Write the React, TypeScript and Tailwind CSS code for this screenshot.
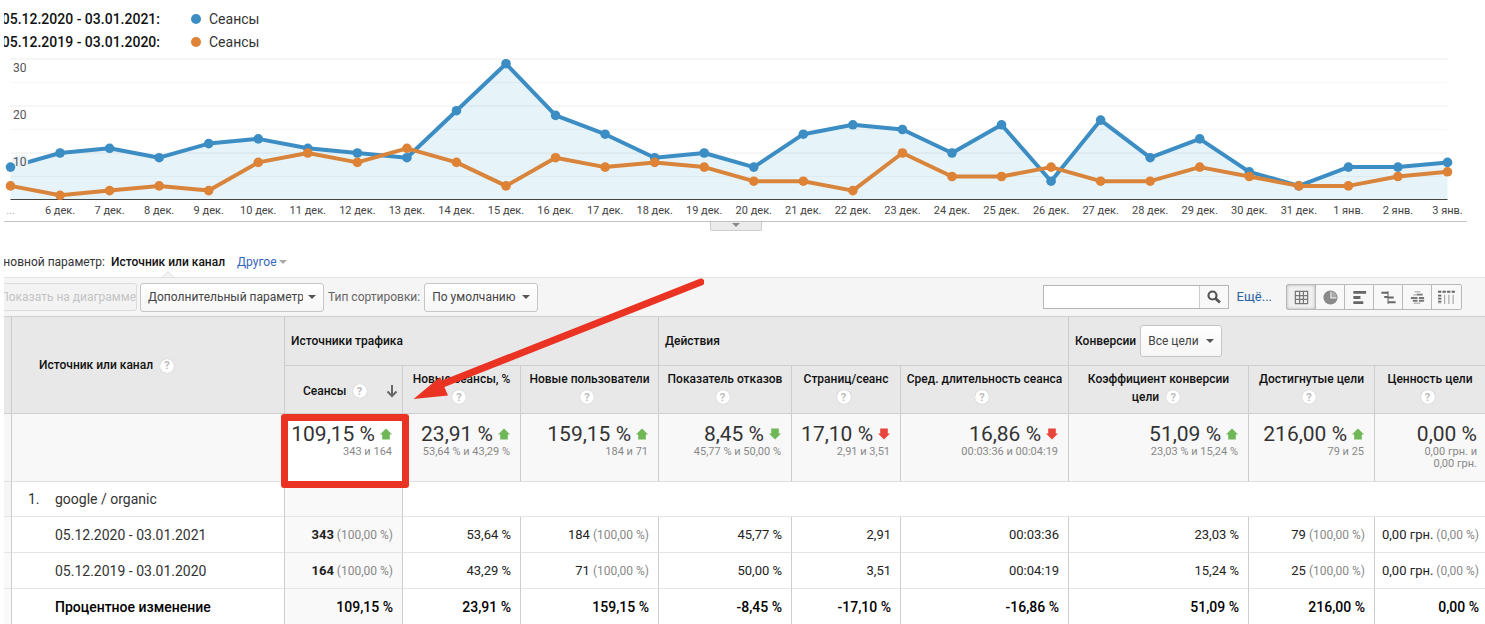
import React from 'react';

const CURRENT = [7, 10, 11, 9, 12, 13, 11, 10, 9, 19, 29, 18, 14, 9, 10, 7, 14, 16, 15, 10, 16, 4, 17, 9, 13, 6, 3, 7, 7, 8];
const PREVIOUS = [3, 1, 2, 3, 2, 8, 10, 8, 11, 8, 3, 9, 7, 8, 7, 4, 4, 2, 10, 5, 5, 7, 4, 4, 7, 5, 3, 3, 5, 6];

const CHART_LEFT = 10.5;
const CHART_RIGHT = 1447.5;
const BASELINE = 146;
const UNIT = 4.7;

const px = (i: number) => CHART_LEFT + (i * (CHART_RIGHT - CHART_LEFT)) / 29;
const py = (v: number) => BASELINE - v * UNIT;
const toPoints = (values: number[]) => values.map((v, i) => `${px(i)},${py(v)}`).join(' ');

const dayLabel = (i: number) => {
  if (i === 0) return '...';
  return i < 27 ? `${i + 5} дек.` : `${i - 26} янв.`;
};

const LegendRow: React.FC<{ period: string; color: string }> = ({ period, color }) => (
  <div className="flex h-[23px] items-center text-sm">
    <div className="flex w-[156px] justify-end overflow-hidden whitespace-nowrap font-medium text-[#111]">
      <span>{period}</span>
    </div>
    <span className={`ml-[31px] mr-2 size-[10px] rounded-full ${color}`} />
    <span className="text-[#333]">Сеансы</span>
  </div>
);

const Chart = () => (
  <svg viewBox="0 0 1485 167" className="block h-auto w-full" role="img" aria-label="Сеансы">
    {[30, 20, 10].map((v) => (
      <g key={v}>
        <line x1={CHART_LEFT} x2={CHART_RIGHT} y1={py(v)} y2={py(v)} stroke="#ececec" />
        <line x1={CHART_LEFT} x2={CHART_RIGHT} y1={py(v - 5)} y2={py(v - 5)} stroke="#f7f7f7" />
      </g>
    ))}
    <polygon
      points={`${CHART_LEFT},${BASELINE} ${toPoints(CURRENT)} ${CHART_RIGHT},${BASELINE}`}
      fill="#058dc7"
      fillOpacity="0.1"
    />
    <line x1={CHART_LEFT} x2={CHART_RIGHT} y1={BASELINE - 0.5} y2={BASELINE - 0.5} stroke="#444" />
    <polyline points={toPoints(CURRENT)} fill="none" stroke="#3c8dc3" strokeWidth="4" strokeLinejoin="round" />
    {[30, 20, 10].map((v) => (
      <text
        key={v}
        x="13"
        y={py(v) + 13}
        fontSize="12"
        fill="#555"
        stroke={v === 10 ? '#e9f3f8' : '#fff'}
        strokeWidth="4"
        paintOrder="stroke"
      >
        {v}
      </text>
    ))}
    {CURRENT.map((v, i) => (
      <circle key={i} cx={px(i)} cy={py(v)} r="4.8" fill="#3c8dc3" />
    ))}
    <polyline points={toPoints(PREVIOUS)} fill="none" stroke="#d9843b" strokeWidth="4" strokeLinejoin="round" />
    {PREVIOUS.map((v, i) => (
      <circle key={i} cx={px(i)} cy={py(v)} r="4.8" fill="#de8236" />
    ))}
    {CURRENT.map((_, i) => (
      <text key={i} x={px(i)} y="160" fontSize="11" fill={i === 0 ? '#aaa' : '#444'} textAnchor="middle">
        {dayLabel(i)}
      </text>
    ))}
  </svg>
);

const Caret: React.FC<{ className: string }> = ({ className }) => (
  <svg viewBox="0 0 8 4" className={`pointer-events-none absolute h-1 w-2 ${className}`} aria-hidden="true">
    <path d="M0 0h8L4 4z" fill="currentColor" />
  </svg>
);

const DropDown: React.FC<{ label: string; value: string; size: string }> = ({ label, value, size }) => (
  <div className="relative flex shrink-0 items-center">
    <select
      aria-label={label}
      className={`appearance-none rounded-[3px] border border-[#c6c6c6] bg-gradient-to-b from-white to-[#f6f6f6] pl-[7px] pr-5 text-xs text-[#444] ${size}`}
    >
      <option>{value}</option>
    </select>
    <Caret className="right-2 text-[#555]" />
  </div>
);

const Help = () => (
  <button
    type="button"
    aria-label="Справка"
    className="inline-flex size-[14px] items-center justify-center rounded-full bg-white align-middle text-[11px] font-bold leading-none text-[#bbb] shadow-[0_0_1px_#aaa]"
  >
    ?
  </button>
);

const TrendIcon: React.FC<{ down?: boolean; color: string }> = ({ down, color }) => (
  <svg viewBox="0 0 12 12" className={`size-3 ${color} ${down ? 'rotate-180' : ''}`} aria-hidden="true">
    <path d="M6 0.5L12 6.5H9.8V11.5H2.2V6.5H0z" fill="currentColor" />
  </svg>
);

const views = [
  {
    name: 'Таблица',
    icon: <path d="M2.5 2.5h13v13h-13zM7 2.5v13M11 2.5v13M2.5 7h13M2.5 11h13" fill="none" stroke="#777" strokeWidth="1.3" />,
  },
  {
    name: 'Процент',
    icon: (
      <>
        <circle cx="9" cy="9" r="7.5" fill="#8a8a8a" />
        <path d="M9.5 3v6.500h5.8" fill="none" stroke="#eee" strokeWidth="1.3" />
        <path d="M10.500 2.500a6 6 0 0 1 5 6h-5z" fill="#a8a8a8" />
      </>
    ),
  },
  {
    name: 'Эффективность',
    icon: <path d="M2.500 2h13.500v3h-13.500zM2.500 7.500h7.500v3h-7.500zM2.500 13h10.500v3h-10.500z" fill="#666" />,
  },
  {
    name: 'Сравнение',
    icon: (
      <>
        <path d="M8.500 2.500v13" stroke="#888" strokeWidth="1.500" />
        <path d="M1.500 4h7M4.500 8.500h4M8.500 9h6M8.500 14h8" stroke="#666" strokeWidth="2.200" />
      </>
    ),
  },
  {
    name: 'Облако терминов',
    icon: (
      <>
        <path d="M6 3h6M4.500 6h3M5 15h7" stroke="#bbb" strokeWidth="1.600" />
        <path d="M8 6h6.500M2 9.500h7M10.500 9.500h5.500M4 12.500h5M10.500 12.500h5.500" stroke="#777" strokeWidth="2" />
      </>
    ),
  },
  {
    name: 'Сводка',
    icon: (
      <>
        <path d="M0 3h18" stroke="#666" strokeWidth="2.200" strokeDasharray="3.500 1.300" />
        <path d="M1.800 6v10" stroke="#666" strokeWidth="3.500" strokeDasharray="2 1.200" />
        <path d="M7 6v10M11.500 6v10M16 6v10" stroke="#aaa" strokeWidth="1.300" />
      </>
    ),
  },
];

const Toolbar = () => (
  <div className="flex h-[39px] items-center border-t border-[#e3e3e3] bg-[#f5f5f5] text-xs">
    <button
      type="button"
      disabled
      className="flex h-7 w-[133px] shrink-0 items-center justify-end overflow-hidden whitespace-nowrap rounded-r-[3px] border-y border-r border-[#dcdcdc] bg-[#f3f3f3] text-[#c4c4c4]"
    >
      Показать на диаграмме
    </button>
    <div className="ml-[3px]">
      <DropDown label="Дополнительный параметр" value="Дополнительный параметр" size="h-[29px] w-[184px]" />
    </div>
    <span className="mx-1 whitespace-nowrap text-[#666]">Тип сортировки:</span>
    <DropDown label="Тип сортировки" value="По умолчанию" size="h-[29px] w-[114px]" />
    <form className="ml-auto flex h-6 border border-[#b5b5b5]" onSubmit={(e) => e.preventDefault()}>
      <input type="text" aria-label="Поиск" className="w-[155px] bg-white px-1 outline-none" />
      <button
        type="submit"
        aria-label="Найти"
        className="flex w-[29px] items-center justify-center border-l border-[#ccc] bg-[#f8f8f8]"
      >
        <svg viewBox="0 0 14 14" className="size-[14px]" aria-hidden="true">
          <circle cx="5.500" cy="5.500" r="4" fill="none" stroke="#555" strokeWidth="2.200" />
          <path d="M8.500 8.500l4.500 4" stroke="#555" strokeWidth="2.800" />
        </svg>
      </button>
    </form>
    <a href="#more" className="ml-2 text-[13px] text-[#2a62a5]">
      Ещё...
    </a>
    <div className="ml-[14px] mr-[23px] flex h-[26px] divide-x divide-[#b9b9b9] rounded-[2px] border border-[#b9b9b9]">
      {views.map((view, i) => (
        <button
          key={view.name}
          type="button"
          aria-label={view.name}
          className={`flex w-[29px] items-center justify-center ${
            i === 0 ? 'bg-[#f0f0f0] shadow-[inset_0_0_3px_#aaa]' : 'bg-[#f8f8f8]'
          }`}
        >
          <svg viewBox="0 0 18 18" className="size-[17px]">
            {view.icon}
          </svg>
        </button>
      ))}
    </div>
  </div>
);

interface Metric {
  title: string;
  titleTail?: string;
  total: string;
  compare: string;
  trend?: 'up' | 'down';
  bad?: boolean;
  rows: [string, string?][];
  change: string;
}

const metrics: Metric[] = [
  { title: 'Сеансы', total: '109,15 %', compare: '343 и 164', trend: 'up', rows: [['343', '(100,00 %)'], ['164', '(100,00 %)']], change: '109,15 %' },
  { title: 'Новые сеансы, %', total: '23,91 %', compare: '53,64 % и 43,29 %', trend: 'up', rows: [['53,64 %'], ['43,29 %']], change: '23,91 %' },
  { title: 'Новые пользователи', total: '159,15 %', compare: '184 и 71', trend: 'up', rows: [['184', '(100,00 %)'], ['71', '(100,00 %)']], change: '159,15 %' },
  { title: 'Показатель отказов', total: '8,45 %', compare: '45,77 % и 50,00 %', trend: 'down', rows: [['45,77 %'], ['50,00 %']], change: '-8,45 %' },
  { title: 'Страниц/сеанс', total: '17,10 %', compare: '2,91 и 3,51', trend: 'down', bad: true, rows: [['2,91'], ['3,51']], change: '-17,10 %' },
  { title: 'Сред. длительность сеанса', total: '16,86 %', compare: '00:03:36 и 00:04:19', trend: 'down', bad: true, rows: [['00:03:36'], ['00:04:19']], change: '-16,86 %' },
  { title: 'Коэффициент конверсии', titleTail: 'цели', total: '51,09 %', compare: '23,03 % и 15,24 %', trend: 'up', rows: [['23,03 %'], ['15,24 %']], change: '51,09 %' },
  { title: 'Достигнутые цели', total: '216,00 %', compare: '79 и 25', trend: 'up', rows: [['79', '(100,00 %)'], ['25', '(100,00 %)']], change: '216,00 %' },
  { title: 'Ценность цели', total: '0,00 %', compare: '0,00 грн. и 0,00 грн.', rows: [['0,00 грн.', '(0,00 %)'], ['0,00 грн.', '(0,00 %)']], change: '0,00 %' },
];

const periods = ['05.12.2020 - 03.01.2021', '05.12.2019 - 03.01.2020'];

const head = 'border-b border-[#cfcfcf] bg-[#e8e8e8] text-xs font-medium text-[#111]';
const body = 'border-b border-[#e4e4e4] whitespace-nowrap';
const line = 'border-l border-l-[#cdcdcd]';

const ReportTable = () => (
  <table className="w-full table-fixed border-separate border-spacing-0 border-t border-[#cfcfcf]">
    <colgroup>
      <col className="w-[7px]" />
      <col className="w-[273px]" />
      <col className="w-[118px]" />
      <col className="w-[118px]" />
      <col className="w-[138px]" />
      <col className="w-[133px]" />
      <col className="w-[109px]" />
      <col className="w-[168px]" />
      <col className="w-[180px]" />
      <col className="w-[126px]" />
      <col />
    </colgroup>
    <thead>
      <tr className="h-[49px] text-left">
        <th rowSpan={2} className={head} />
        <th rowSpan={2} className={`${head} ${line} pl-[27px]`}>
          <span className="mr-[7px]">Источник или канал</span>
          <Help />
        </th>
        <th colSpan={3} className={`${head} ${line} pl-[6px]`}>Источники трафика</th>
        <th colSpan={3} className={`${head} ${line} pl-[6px]`}>Действия</th>
        <th colSpan={3} className={`${head} ${line} pl-[6px]`}>
          <div className="flex items-center gap-1">
            <span>Конверсии</span>
            <DropDown label="Конверсии" value="Все цели" size="h-8 w-[82px] font-normal" />
          </div>
        </th>
      </tr>
      <tr className="h-12">
        {metrics.map((m, i) =>
          i === 0 ? (
            <th key={m.title} className={`${head} ${line} pl-[18px] pr-1 pt-[3px]`}>
              <div className="flex items-center">
                <span className="mr-[6px]">{m.title}</span>
                <Help />
                <svg viewBox="0 0 12 14" className="ml-auto h-[14px] w-3" aria-label="По убыванию">
                  <path d="M6 1v11M1.500 7.500L6 12l4.500-4.500" fill="none" stroke="#666" strokeWidth="2" />
                </svg>
              </div>
            </th>
          ) : (
            <th key={m.title} className={`${head} ${line} whitespace-nowrap pt-1 align-top leading-[18px]`}>
              <div>{m.title}</div>
              <div className="flex h-[18px] items-center justify-center gap-[7px] pr-[5px]">
                {m.titleTail && <span>{m.titleTail}</span>}
                <Help />
              </div>
            </th>
          ),
        )}
      </tr>
    </thead>
    <tbody className="text-[13px]">
      <tr className="h-[68px]">
        <td className="border-b border-[#e0e0e0] bg-[#f7f7f7]" />
        <td className={`border-b border-b-[#e0e0e0] bg-[#f8f8f8] ${line}`} />
        {metrics.map((m, i) => (
          <td
            key={m.title}
            className={`relative whitespace-nowrap border-b border-b-[#e0e0e0] pt-2 text-right align-top ${line} ${
              i === 0 ? 'bg-white' : 'bg-[#f8f8f8]'
            } ${m.trend ? 'pr-[10px]' : 'pl-9 pr-2'}`}
          >
            <div className="flex items-center justify-end gap-[5px] text-[21px] leading-6 text-[#333]">
              <span>{m.total}</span>
              {m.trend && <TrendIcon down={m.trend === 'down'} color={m.bad ? 'text-[#e8453c]' : 'text-[#6fb756]'} />}
            </div>
            <div className={`text-[11px] leading-3 text-[#888] ${m.trend ? '' : 'whitespace-normal'}`}>{m.compare}</div>
            {i === 0 && (
              <div className="absolute -bottom-[7px] -left-1 -right-[7px] top-0 z-10 rounded-[3px] border-[7px] border-[#ea3323]" />
            )}
          </td>
        ))}
      </tr>
      <tr className="h-[35px] text-[#333]">
        <td className={`${body} bg-[#f5f5f5]`} />
        <td className={`${body} ${line} pl-4 text-sm`}>
          <div className="flex">
            <span className="w-[27px]">1.</span>
            <span>google / organic</span>
          </div>
        </td>
        <td className={`${body} ${line} bg-[#f9f9f9]`} />
        <td colSpan={8} className={`${body} ${line}`} />
      </tr>
      {periods.map((period, row) => (
        <tr key={period} className="h-9 text-[#222]">
          <td className={`${body} bg-[#f9f9f9]`} />
          <td className={`${body} ${line} pl-[43px] text-sm text-[#333]`}>{period}</td>
          {metrics.map((m, i) => {
            const [value, share] = m.rows[row];
            return (
              <td key={m.title} className={`${body} ${line} text-right ${i === 8 ? 'pr-[6px]' : 'pr-[9px]'} ${i === 0 ? 'bg-[#f9f9f9]' : ''}`}>
                <span className={i === 0 ? 'font-bold' : ''}>{value}</span>
                {share && <span className="text-xs text-[#888]"> {share}</span>}
              </td>
            );
          })}
        </tr>
      ))}
      <tr className="h-9 text-sm font-medium text-black">
        <td className={`${body} bg-[#f9f9f9]`} />
        <td className={`${body} ${line} pl-[43px]`}>Процентное изменение</td>
        {metrics.map((m, i) => (
          <td key={m.title} className={`${body} ${line} text-right ${i === 8 ? 'pr-[6px]' : 'pr-[9px]'} ${i === 0 ? 'bg-[#f9f9f9]' : ''}`}>
            {m.change}
          </td>
        ))}
      </tr>
    </tbody>
  </table>
);

export default function App() {
  return (
    <div className="h-screen overflow-hidden bg-white font-[Roboto,'Liberation_Sans',sans-serif]">
      <div className="ml-1 pb-px pt-[7px]">
        <LegendRow period="05.12.2020 - 03.01.2021:" color="bg-[#3c8dc3]" />
        <LegendRow period="05.12.2019 - 03.01.2020:" color="bg-[#de8236]" />
      </div>
      <Chart />

      <div className="ml-1 mr-[18px] flex justify-center border-t border-[#c4c4c4]">
        <button
          type="button"
          aria-label="Свернуть график"
          className="flex h-[9px] w-[52px] justify-center rounded-b-[2px] border-x border-b border-[#ccc] bg-[#ebebeb] pt-px"
        >
          <svg viewBox="0 0 8 4" className="h-1 w-2">
            <path d="M0 0h8L4 4z" fill="#888" />
          </svg>
        </button>
      </div>

      {/* Primary dimension */}
      <div className="ml-1 mt-[15px] flex h-[31px] items-center text-xs">
        <div className="flex w-[101px] justify-end overflow-hidden whitespace-nowrap text-[#333]">
          <span>Основной параметр:</span>
        </div>
        <div className="relative ml-[6px] flex h-full items-center whitespace-nowrap font-medium text-[#111]">
          Источник или канал
          <svg viewBox="0 0 12 7" className="absolute -bottom-px left-1/2 h-[7px] w-3 -translate-x-1/2">
            <path d="M0 6.500L6 0.500l6 6" fill="#f5f5f5" stroke="#ddd" />
          </svg>
        </div>
        <div className="relative ml-3 flex items-center">
          <select aria-label="Другое" className="w-[50px] appearance-none text-[#3367c4]">
            <option>Другое</option>
          </select>
          <Caret className="right-0 text-[#aaa]" />
        </div>
      </div>

      <div className="relative ml-1">
        <Toolbar />
        <ReportTable />
        {/* Pointer to the highlighted total */}
        <svg viewBox="0 0 300 130" className="pointer-events-none absolute left-[400px] top-0 z-20 h-[130px] w-[300px]">
          <path d="M36 108L297 5" stroke="#ea3323" strokeWidth="7" strokeLinecap="round" />
          <path d="M9.500 122L36 100l8 18.500z" fill="#ea3323" />
        </svg>
      </div>
    </div>
  );
}
